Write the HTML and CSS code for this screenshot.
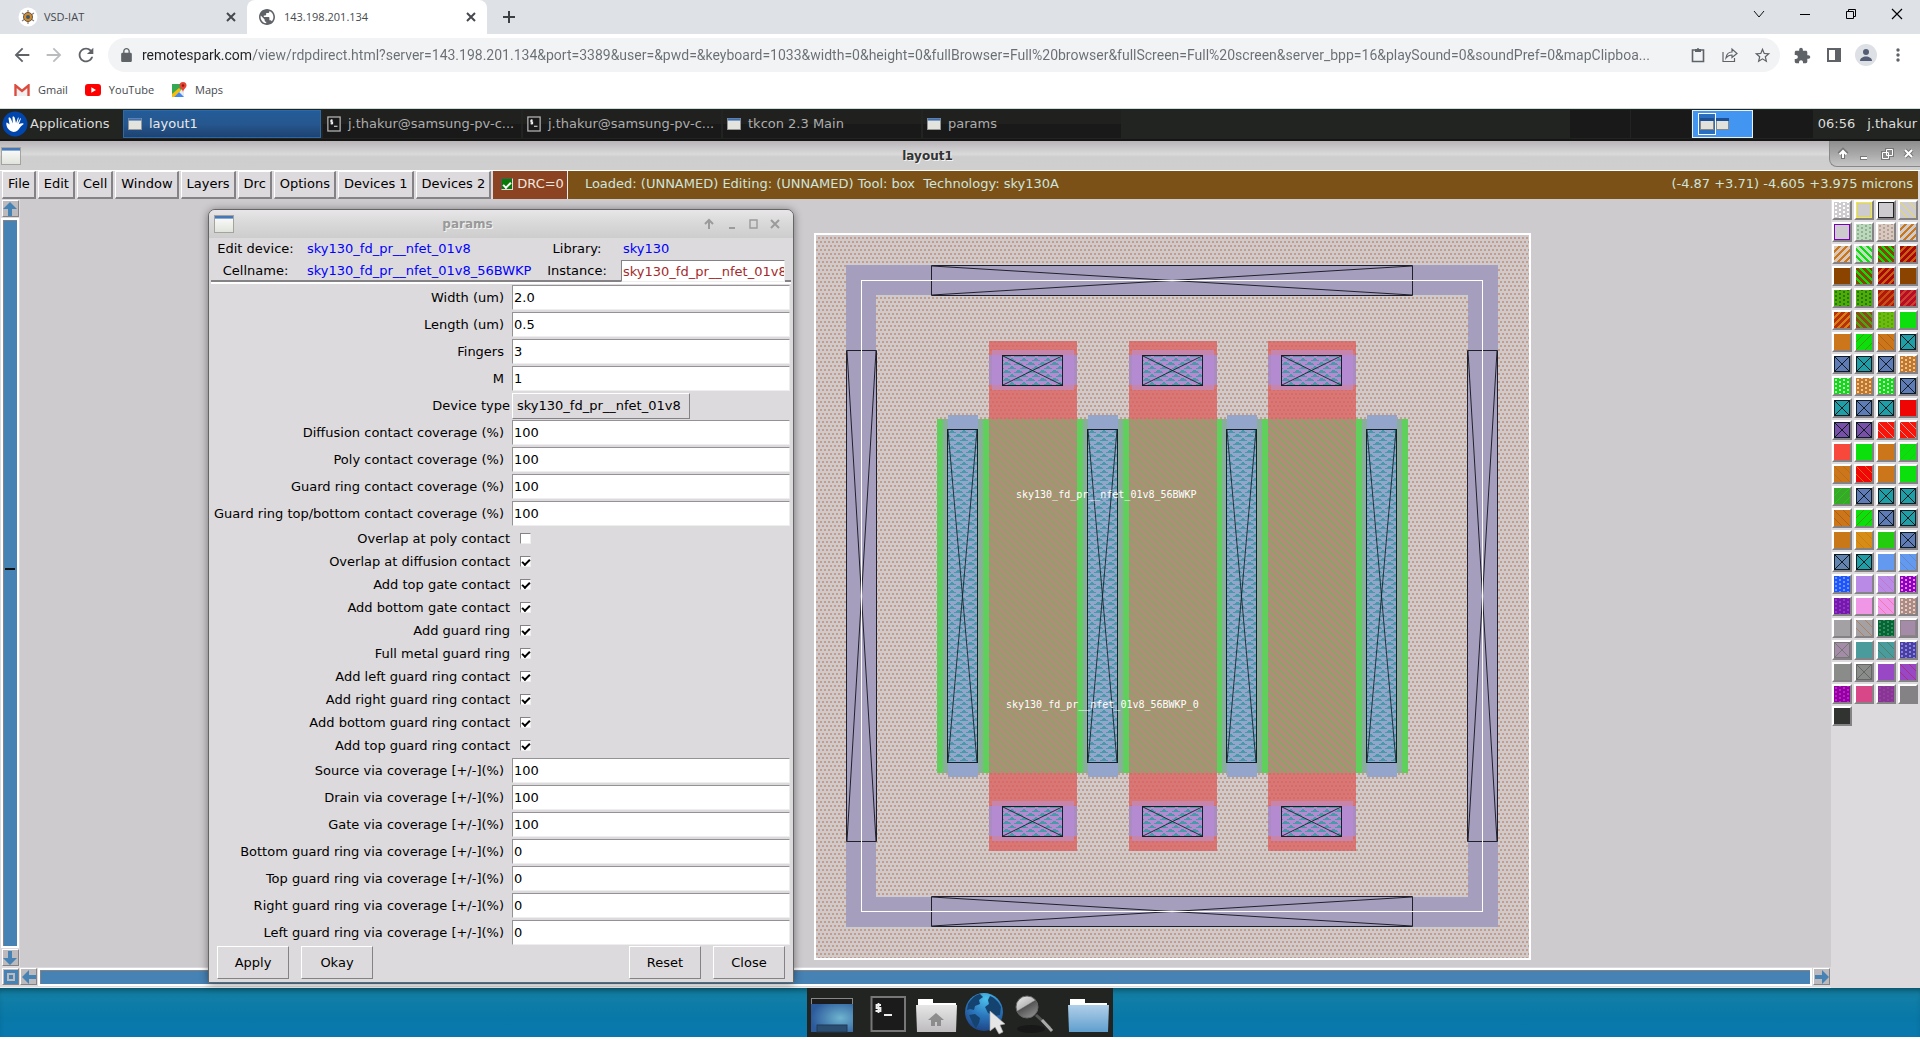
FILE: index.html
```html
<!DOCTYPE html>
<html lang="en">
<head>
<meta charset="utf-8">
<title>143.198.201.134</title>
<link rel="stylesheet" href="styles.css">
</head>
<body>
<svg class="defs" width="0" height="0" aria-hidden="true">
  <symbol id="i-close" viewBox="0 0 12 12"><path d="M2 2l8 8M10 2l-8 8" fill="none" stroke="currentColor" stroke-width="2"/></symbol>
  <symbol id="i-term" viewBox="0 0 16 18"><rect x="1" y="1" width="14" height="16" fill="#191919" stroke="#b9b9b9" stroke-width="1.4"/><path d="M6.6 4.6H4.4v2h2v2H4M5.4 3.6v6M8 11.5h4" fill="none" stroke="#eee" stroke-width="1.2"/></symbol>
  <symbol id="i-win" viewBox="0 0 16 14"><rect x="0.5" y="0.5" width="15" height="13" fill="#e4e4df" stroke="#999"/><rect x="0.5" y="0.5" width="15" height="2.5" fill="#3b6fb5"/></symbol>
  <symbol id="i-winbig" viewBox="0 0 20 18"><rect x="0.5" y="0.5" width="19" height="17" fill="url(#gWin)" stroke="#a3a3a0"/><rect x="1" y="1" width="18" height="2.6" fill="#4478b8"/></symbol>
  <linearGradient id="gWin" x2="0" y2="1"><stop offset="0" stop-color="#fff"/><stop offset="1" stop-color="#dfe2da"/></linearGradient>
</svg>

<header class="chrome">
  <div class="tabs">
    <div class="tab">
      <svg width="20" height="20" viewBox="0 0 20 20"><circle cx="10" cy="10" r="9.5" fill="#fff"/><path d="M10 3v14M4 6l12 8M16 6L4 14" stroke="#8a8378" stroke-width="1.2"/><circle cx="10" cy="10" r="4.5" fill="#d58a2c" stroke="#62564a"/><circle cx="10" cy="10" r="2" fill="#345a72"/></svg>
      <span class="tab-title">VSD-IAT</span>
      <button class="tab-close" aria-label="Close tab"><svg width="12" height="12"><use href="#i-close"/></svg></button>
    </div>
    <div class="tab active">
      <svg width="16" height="16" viewBox="2 2 20 20"><path fill="#5f6368" d="M12 2C6.480 2 2 6.480 2 12s4.480 10 10 10 10-4.480 10-10S17.520 2 12 2zm-1 17.930c-3.950-.49-7-3.850-7-7.930 0-.62.08-1.210.21-1.790L9 15v1c0 1.100.9 2 2 2v1.930zm6.900-2.540c-.26-.81-1-1.390-1.900-1.390h-1v-3c0-.55-.45-1-1-1H8v-2h2c.55 0 1-.45 1-1V7h2c1.100 0 2-.9 2-2v-.41c2.930 1.190 5 4.060 5 7.410 0 2.080-.8 3.970-2.100 5.390z"/></svg>
      <span class="tab-title">143.198.201.134</span>
      <button class="tab-close" aria-label="Close tab"><svg width="12" height="12"><use href="#i-close"/></svg></button>
    </div>
    <button class="tab-new" aria-label="New tab"><svg width="14" height="14" viewBox="0 0 14 14"><path d="M7 1v12M1 7h12" stroke="#3c4043" stroke-width="2"/></svg></button>
    <div class="win-ctl">
      <button aria-label="Search tabs"><svg width="12" height="12" viewBox="0 0 12 12"><path d="M1 3l5 6 5-6" fill="none" stroke="#111"/></svg></button>
      <button aria-label="Minimize"><svg width="12" height="12" viewBox="0 0 12 12"><path d="M1 6.500h10" stroke="#000"/></svg></button>
      <button aria-label="Restore"><svg width="12" height="12" viewBox="0 0 12 12"><path d="M1.500 3.500h7v7h-7zM3.500 3V1.500h7v7H9" fill="none" stroke="#000"/></svg></button>
      <button aria-label="Close"><svg width="12" height="12" viewBox="0 0 12 12"><path d="M1 1l10 10M11 1L1 11" stroke="#000" stroke-width="1.200"/></svg></button>
    </div>
  </div>
  <div class="toolbar">
    <button aria-label="Back"><svg width="22" height="22" viewBox="0 0 24 24"><path fill="#5f6368" d="M20 11H7.830l5.590-5.590L12 4l-8 8 8 8 1.410-1.410L7.830 13H20v-2z"/></svg></button>
    <button aria-label="Forward"><svg width="22" height="22" viewBox="0 0 24 24"><path fill="#babcbe" d="M12 4l-1.410 1.410L16.170 11H4v2h12.170l-5.580 5.590L12 20l8-8z"/></svg></button>
    <button aria-label="Reload"><svg width="22" height="22" viewBox="0 0 24 24"><path fill="#5f6368" d="M17.650 6.350C16.200 4.900 14.210 4 12 4c-4.420 0-7.990 3.580-7.990 8s3.570 8 7.990 8c3.730 0 6.840-2.550 7.730-6h-2.080c-.82 2.330-3.040 4-5.650 4-3.310 0-6-2.690-6-6s2.690-6 6-6c1.660 0 3.140.69 4.220 1.780L13 11h7V4l-2.350 2.350z"/></svg></button>
    <div class="omnibox">
      <svg width="13" height="14" viewBox="3 1 18 21"><path fill="#5f6368" d="M18 8h-1V6c0-2.760-2.240-5-5-5S7 3.240 7 6v2H6c-1.100 0-2 .9-2 2v10c0 1.100.9 2 2 2h12c1.100 0 2-.9 2-2V10c0-1.100-.9-2-2-2zM9 6c0-1.660 1.340-3 3-3s3 1.340 3 3v2H9V6z"/></svg>
      <input class="url" aria-label="Address" value="remotespark.com/view/rdpdirect.html?server=143.198.201.134&amp;port=3389&amp;user=&amp;pwd=&amp;keyboard=1033&amp;width=0&amp;height=0&amp;fullBrowser=Full%20browser&amp;fullScreen=Full%20screen&amp;server_bpp=16&amp;playSound=0&amp;soundPref=0&amp;mapClipboa...">
      <button aria-label="Clipboard"><svg width="16" height="16" viewBox="0 0 16 16"><path d="M2.500 3h11v11.500h-11z" fill="none" stroke="#5f6368" stroke-width="1.600"/><path d="M5 2h2a1 1 0 0 1 2 0h2v3H5z" fill="#5f6368"/></svg></button>
      <button aria-label="Share"><svg width="16" height="16" viewBox="0 0 16 16"><path d="M1 5v9.500h11.500V11M4 11c.5-4 3-6 6-6V2l5 4.500-5 4V8C7.500 8 5.500 9 4 11z" fill="none" stroke="#5f6368" stroke-width="1.200"/></svg></button>
      <button aria-label="Bookmark"><svg width="17" height="17" viewBox="1 1 22 22"><path fill="#5f6368" d="M22 9.240l-7.190-.62L12 2 9.190 8.630 2 9.240l5.460 4.730L5.820 21 12 17.270 18.180 21l-1.630-7.030L22 9.240zM12 15.400l-3.760 2.270 1-4.280-3.320-2.880 4.380-.38L12 6.100l1.710 4.040 4.380.38-3.320 2.880 1 4.280L12 15.400z"/></svg></button>
    </div>
    <button aria-label="Extensions"><svg width="17" height="17" viewBox="1 0 23 23"><path fill="#5f6368" d="M20.500 11H19V7c0-1.100-.9-2-2-2h-4V3.500C13 2.120 11.880 1 10.500 1S8 2.120 8 3.500V5H4c-1.100 0-1.990.9-1.990 2v3.800H3.500c1.490 0 2.700 1.210 2.700 2.700s-1.210 2.700-2.700 2.700H2V20c0 1.100.9 2 2 2h3.800v-1.500c0-1.490 1.210-2.700 2.700-2.700 1.490 0 2.700 1.210 2.700 2.700V22H17c1.100 0 2-.9 2-2v-4h1.500c1.380 0 2.500-1.120 2.500-2.500S21.880 11 20.500 11z"/></svg></button>
    <button aria-label="Side panel"><svg width="14" height="14" viewBox="0 0 14 14"><path d="M0 0h14v14H0zM2 2v10h6V2z" fill="#5f6368" fill-rule="evenodd"/></svg></button>
    <button aria-label="Profile"><svg width="22" height="22" viewBox="0 0 22 22"><circle cx="11" cy="11" r="11" fill="#dde1e6"/><circle cx="11" cy="8" r="3" fill="#535d75"/><path d="M5 17c0-3 3-4.500 6-4.500s6 1.500 6 4.500z" fill="#535d75"/></svg></button>
    <button aria-label="Menu"><svg width="4" height="14" viewBox="0 0 4 14"><g fill="#5f6368"><circle cx="2" cy="2" r="1.700"/><circle cx="2" cy="7" r="1.700"/><circle cx="2" cy="12" r="1.700"/></g></svg></button>
  </div>
  <nav class="bookmarks">
    <a href="#gmail"><svg width="16" height="12" viewBox="0 0 16 12"><path d="M2.800 4v8h10.400V4L8 8z" fill="#f0f0f0"/><path d="M1.500 12V1.500L8 7l6.500-5.500V12" fill="none" stroke="#dd4b3e" stroke-width="2.400"/></svg>Gmail</a>
    <a href="#youtube"><svg width="16" height="12" viewBox="0 0 16 12"><rect width="16" height="12" rx="3" fill="#f00"/><path d="M6.300 3.300v5.400L11 6z" fill="#fff"/></svg>YouTube</a>
    <a href="#maps"><svg width="16" height="16" viewBox="0 0 16 16"><path d="M1 2h12v13H1z" fill="#34a853"/><path d="M3 15L13 5v10z" fill="#e8eaed"/><path d="M3 15l5-5 5 5z" fill="#4285f4"/><path d="M1 12L8 6l2 2L3 15H1z" fill="#fbbc05"/><path d="M12 0a3.500 3.500 0 0 1 3.500 3.500C15.500 6 12.500 7 12 10c-.5-3-3.500-4-3.500-6.500A3.500 3.500 0 0 1 12 0z" fill="#ea4335"/><circle cx="12" cy="3.500" r="1.200" fill="#8c1b12"/></svg>Maps</a>
  </nav>
</header>

<main class="remote">
  <div class="panel">
    <button class="apps"><svg width="26" height="26" viewBox="0 0 26 26"><circle cx="13" cy="13" r="12.500" fill="#0046ad"/><path d="M5.500 17C4.500 15 4 13 4.500 11.500c1 0 2 1 3 2L6.500 7c1-1 2 0 2.500 1l1.800 4.500L10.500 6c1-1 2 0 2.300 1l1.200 5 2-5.500.8.300-1.300 5.700 2.800-5.300.7.400-2.200 5.600c1.500-.7 3.500-1.400 4.700-.7.500 1-1.500 1.700-2.500 2.700-1.700 2-2.500 4.300-5 5.300-3.500 1.200-6.500-.5-8.500-3.500z" fill="#fff"/></svg>Applications</button>
    <button class="task on"><svg width="14" height="12"><use href="#i-win"/></svg><span>layout1</span></button>
    <button class="task"><svg width="14" height="16"><use href="#i-term"/></svg><span>j.thakur@samsung-pv-c...</span></button>
    <button class="task"><svg width="14" height="16"><use href="#i-term"/></svg><span>j.thakur@samsung-pv-c...</span></button>
    <button class="task"><svg width="14" height="12"><use href="#i-win"/></svg><span>tkcon 2.3 Main</span></button>
    <button class="task"><svg width="14" height="12"><use href="#i-win"/></svg><span>params</span></button>
    <div class="pager">
      <button aria-label="Workspace 1"></button><button aria-label="Workspace 2"></button>
      <button class="cur" aria-label="Workspace 3"><svg width="60" height="26" viewBox="0 0 60 26"><rect x="6.500" y="2.500" width="17" height="21" fill="#2a6fbd" stroke="#fff"/><rect x="8.500" y="8.500" width="13" height="10" fill="#e2e2dc" stroke="#888"/><rect x="8" y="7" width="14" height="3" fill="#1c4f93"/><rect x="24.500" y="8.500" width="12" height="10" fill="#e2e2dc" stroke="#888"/><rect x="24" y="7" width="13" height="3" fill="#1c4f93"/></svg></button>
      <button aria-label="Workspace 4"></button>
    </div>
    <span class="clock">06:56</span>
    <span class="user">j.thakur</span>
  </div>

  <section class="window">
    <div class="titlebar">
      <svg width="20" height="18"><use href="#i-winbig"/></svg>
      <h1>layout1</h1>
      <div class="tb-ctl">
        <svg width="84" height="14" viewBox="0 0 84 14"><g fill="none" stroke="#777" stroke-width="4"><path d="M11 12V5M7 7l4-4 4 4M28 11h7"/><path d="M73 3l7 7M80 3l-7 7"/></g><g fill="none" stroke="#fff" stroke-width="2"><path d="M11 11V5M7.500 7.500L11 4l3.500 3.500M29 11h6M73 3l7 7M80 3l-7 7"/></g><path d="M54.500 2.500h6v6h-6zM50.500 5.500h6v6h-6z" fill="#999" stroke="#777" stroke-width="3"/><path d="M54.500 2.500h6v6h-6zM50.500 5.500h6v6h-6z" fill="#888" stroke="#fff"/></svg>
      </div>
    </div>
    <div class="menubar">
      <button>File</button><button>Edit</button><button>Cell</button><button>Window</button><button>Layers</button><button>Drc</button><button>Options</button><button>Devices 1</button><button>Devices 2</button>
      <label class="drc"><input type="checkbox" checked>DRC=0</label>
      <div class="status"><span>Loaded: (UNNAMED) Editing: (UNNAMED) Tool: box&nbsp; Technology: sky130A</span><span>(-4.87 +3.71) -4.605 +3.975 microns</span></div>
    </div>
    <div class="work">
      <div class="vbar">
        <button class="sq" aria-label="Scroll up"><svg width="14" height="14" viewBox="0 0 14 14"><path d="M7 0l7 7H9v7H5V7H0z"/></svg></button>
        <div class="trough"><i class="mark"></i></div>
        <button class="sq" aria-label="Scroll down"><svg width="14" height="14" viewBox="0 0 14 14"><path d="M7 14L0 7h5V0h4v7h5z"/></svg></button>
      </div>
      <div class="canvas">
        <svg class="chip" viewBox="814 233 717 727" width="717" height="727">
          <defs>
            <pattern id="dots" x="816" y="237" width="4" height="8" patternUnits="userSpaceOnUse"><path d="M2 0h2v2h-2zM0 4h2v2h-2z" fill="#cb9a82"/></pattern>
            <pattern id="rdots" x="816" y="237" width="4" height="8" patternUnits="userSpaceOnUse"><path d="M2 0h2v2h-2zM0 4h2v2h-2z" fill="#d96a66"/></pattern>
            <pattern id="hatch" x="816" y="237" width="8" height="8" patternUnits="userSpaceOnUse"><path d="M-1 -1l10 10M-1 7l2 2M7 -1l2 2" stroke="#5cc150" stroke-width="1"/></pattern>
            <pattern id="tri" x="947" y="429" width="12" height="8" patternUnits="userSpaceOnUse"><path d="M0 4h1v-1h2v-1h1v-1h2v1h1v1h2v1h1zM6 8h1v-1h2v-1h1v-1h2v3zM0 8h4v-1h-1v-1h-2v-1h-1z" fill="#479ba8"/></pattern>
            <g id="dc">
              <rect x="943" y="419" width="40" height="354" fill="#8aae9c"/>
              <rect x="948" y="415" width="30" height="362" fill="#93a5ca"/>
              <rect x="947.500" y="429.500" width="30" height="333" fill="url(#tri)" stroke="#142026"/>
              <path d="M948 430l29 332M977 430l-29 332" stroke="#142026" stroke-opacity=".85"/>
            </g>
            <g id="pc">
              <rect x="992" y="350" width="82" height="40" fill="#c885ac"/>
              <rect x="989" y="355" width="88" height="30" fill="#aa8cc0"/>
              <rect x="992" y="355" width="82" height="30" fill="#b48ad0"/>
              <rect x="1002.500" y="355.500" width="60" height="30" fill="url(#tri)" stroke="#142026"/>
              <path d="M1003 356l59 29M1062 356l-59 29" stroke="#142026" stroke-opacity=".85"/>
            </g>
            <g id="finger">
              <rect x="989" y="341" width="88" height="510" fill="#d87876"/>
              <rect x="989" y="341" width="88" height="510" fill="url(#rdots)"/>
              <rect x="989" y="419" width="88" height="354" fill="#ae8e76"/>
              <rect x="989" y="419" width="88" height="354" fill="url(#hatch)"/>
              <use href="#pc"/><use href="#pc" y="451"/>
            </g>
          </defs>
          <rect x="815" y="234" width="715" height="725" fill="#cecbcf"/>
          <rect x="815" y="234" width="715" height="725" fill="url(#dots)" stroke="#fff" stroke-width="2"/>
          <path d="M846 265h652v662H846zM876 295v602h592V295z" fill="#a59fbd" fill-rule="evenodd"/>
          <g fill="none" stroke="#20202c">
            <path d="M931.500 265.500h481v30h-481zM931.500 896.500h481v30h-481zM846.500 350.500h30v491h-30zM1467.500 350.500h30v491h-30z"/>
            <path d="M932 266l480 29M1412 266l-480 29M932 897l480 29M1412 897l-480 29M847 351l29 490M876 351l-29 490M1468 351l29 490M1497 351l-29 490"/>
          </g>
          <rect x="861.500" y="280.500" width="621" height="631" fill="none" stroke="#fff"/>
          <rect x="937" y="419" width="471" height="354" fill="#60d05c"/>
          <use href="#finger"/><use href="#finger" x="140"/><use href="#finger" x="279"/>
          <use href="#dc"/><use href="#dc" x="140"/><use href="#dc" x="279"/><use href="#dc" x="419"/>
          <g class="netname"><text x="1016" y="498">sky130_fd_pr__nfet_01v8_56BWKP</text><text x="1006" y="708">sky130_fd_pr__nfet_01v8_56BWKP_0</text></g>
        </svg>
      </div>
      <div class="palette" id="palette"></div>
      <div class="hbar">
        <button class="sq" aria-label="Fit view"><svg width="14" height="14" viewBox="0 0 14 14"><path d="M0 0h14v14H0zM3 3v8h8V3zM5 5h4v4H5z" fill-rule="evenodd"/></svg></button>
        <button class="sq" aria-label="Scroll left"><svg width="14" height="14" viewBox="0 0 14 14"><path d="M0 7l7-7v5h7v4H7v5z"/></svg></button>
        <div class="trough"></div>
        <button class="sq" aria-label="Scroll right"><svg width="14" height="14" viewBox="0 0 14 14"><path d="M14 7l-7 7V9H0V5h7V0z"/></svg></button>
      </div>
    </div>
  </section>

  <form class="dialog">
    <div class="dlg-title">
      <svg width="20" height="18"><use href="#i-winbig"/></svg>
      <h2>params</h2>
      <svg width="80" height="12" viewBox="0 0 80 12" fill="none" stroke="#9b9b9b" stroke-width="2"><path d="M8 11V3M4 6l4-4 4 4M28 10h6"/><path d="M49 2h7v8h-7z" stroke-width="1.400"/><path d="M70 2l8 8M78 2l-8 8"/></svg>
    </div>
    <div class="dlg-head">
      <span>Edit device:</span><b>sky130_fd_pr__nfet_01v8</b><span>Library:</span><b>sky130</b>
      <span>Cellname:</span><b>sky130_fd_pr__nfet_01v8_56BWKP</b><label for="inst">Instance:</label><input id="inst" value="sky130_fd_pr__nfet_01v8_56BWKP_0">
    </div>
    <div class="fields">
      <label class="f"><span>Width (um)</span><input value="2.0"></label>
      <label class="f"><span>Length (um)</span><input value="0.5"></label>
      <label class="f"><span>Fingers</span><input value="3"></label>
      <label class="f"><span>M</span><input value="1"></label>
      <label class="f sel"><span>Device type</span><select><option>sky130_fd_pr__nfet_01v8</option></select></label>
      <label class="f"><span>Diffusion contact coverage (%)</span><input value="100"></label>
      <label class="f"><span>Poly contact coverage (%)</span><input value="100"></label>
      <label class="f"><span>Guard ring contact coverage (%)</span><input value="100"></label>
      <label class="f"><span>Guard ring top/bottom contact coverage (%)</span><input value="100"></label>
      <label class="c"><span>Overlap at poly contact</span><input type="checkbox"></label>
      <label class="c"><span>Overlap at diffusion contact</span><input type="checkbox" checked></label>
      <label class="c"><span>Add top gate contact</span><input type="checkbox" checked></label>
      <label class="c"><span>Add bottom gate contact</span><input type="checkbox" checked></label>
      <label class="c"><span>Add guard ring</span><input type="checkbox" checked></label>
      <label class="c"><span>Full metal guard ring</span><input type="checkbox" checked></label>
      <label class="c"><span>Add left guard ring contact</span><input type="checkbox" checked></label>
      <label class="c"><span>Add right guard ring contact</span><input type="checkbox" checked></label>
      <label class="c"><span>Add bottom guard ring contact</span><input type="checkbox" checked></label>
      <label class="c"><span>Add top guard ring contact</span><input type="checkbox" checked></label>
      <label class="f"><span>Source via coverage [+/-](%)</span><input value="100"></label>
      <label class="f"><span>Drain via coverage [+/-](%)</span><input value="100"></label>
      <label class="f"><span>Gate via coverage [+/-](%)</span><input value="100"></label>
      <label class="f"><span>Bottom guard ring via coverage [+/-](%)</span><input value="0"></label>
      <label class="f"><span>Top guard ring via coverage [+/-](%)</span><input value="0"></label>
      <label class="f"><span>Right guard ring via coverage [+/-](%)</span><input value="0"></label>
      <label class="f"><span>Left guard ring via coverage [+/-](%)</span><input value="0"></label>
    </div>
    <div class="actions"><button type="button">Apply</button><button type="button">Okay</button><button type="button" class="push">Reset</button><button type="button">Close</button></div>
  </form>

  <footer class="desk">
    <div class="dock">
      <svg width="306" height="49" viewBox="807 988 306 49">
        <defs>
          <radialGradient id="gDesk" cx=".7" cy=".5" r=".7"><stop offset="0" stop-color="#6fb4cf"/><stop offset="1" stop-color="#2c5a9c"/></radialGradient>
          <linearGradient id="gHome" x2="0" y2="1"><stop offset="0" stop-color="#e6e6e6"/><stop offset="1" stop-color="#bdbbbe"/></linearGradient>
          <linearGradient id="gFold" x2="0" y2="1"><stop offset="0" stop-color="#b0cfe8"/><stop offset="1" stop-color="#5f9fcf"/></linearGradient>
          <radialGradient id="gGlobe" cx=".55" cy=".15" r=".9"><stop offset="0" stop-color="#4cc0ec"/><stop offset=".5" stop-color="#2b78bd"/><stop offset="1" stop-color="#1d3f80"/></radialGradient>
          <linearGradient id="gLens" x2=".6" y2="1"><stop offset="0" stop-color="#efefef"/><stop offset=".5" stop-color="#bbb"/><stop offset=".55" stop-color="#555"/><stop offset="1" stop-color="#888"/></linearGradient>
        </defs>
        <rect x="811.500" y="998.500" width="41" height="8" fill="#1c1c1c" stroke="#888"/><rect x="811" y="1004" width="42" height="28" fill="url(#gDesk)"/><rect x="817" y="1025" width="30" height="7" fill="#2a4d70" stroke="#203a58"/>
        <rect x="871.500" y="997" width="33.500" height="34" fill="#1b1b1b" stroke="#777" stroke-width="2"/><path d="M881 1005h-4.500v3h4v3h-5M878.500 1003v10M884 1015h8" fill="none" stroke="#eee" stroke-width="1.800"/>
        <path d="M918 999h15v4h23v5h-38z" fill="#fff"/><path d="M916 1005h41l-1 27h-39z" fill="url(#gHome)"/><path d="M936 1013l-8 7h3v6h4v-4h2v4h4v-6h3z" fill="#8c8c8c"/>
        <circle cx="984" cy="1012" r="19" fill="url(#gGlobe)"/><path d="M968 1004c3-5 7-9 12-10l3 3-4 3 1 4-5 2-1 4-4-1-3 1zM969 1015l6-1 5 4-1 5-3 5-3-4zM990 996c5 2 9 6 11 11l-1 8-5 1-7-3-3-6 4-3-1-4z" fill="#15436f"/>
        <path d="M990 1011l15 13-5 1 3 7-4 2-4-7-5 4z" fill="#e6e6e6" stroke="#aaa" stroke-width=".6"/>
        <ellipse cx="1031" cy="1029" rx="14" ry="4" fill="#181818"/><path d="M1036 1015l14 13" stroke="#555" stroke-width="3"/><path d="M1042 1020l10 11" stroke="#aaa" stroke-width="3"/><circle cx="1027" cy="1007" r="11" fill="url(#gLens)" stroke="#666"/>
        <path d="M1070 999h15v4h22v5h-37z" fill="#fff"/><path d="M1068 1005h41l-1 27h-39z" fill="url(#gFold)"/>
      </svg>
    </div>
  </footer>
</main>
<script src="script.js"></script>
</body>
</html>
```
FILE: styles.css
```css
*, *::before, *::after { box-sizing: border-box; }
body {
  margin: 0; min-height: 100vh; padding-bottom: 3px; background: #fff; overflow: hidden;
  display: flex; flex-direction: column;
  font: 13px/16px "DejaVu Sans", sans-serif; color: #000;
}
button, input, select { font: inherit; color: inherit; margin: 0; padding: 0; border: 0; border-radius: 0; background: none; }
button { display: flex; align-items: center; justify-content: center; }
svg { display: block; flex: none; }
h1, h2 { margin: 0; font-size: 12px; line-height: 16px; }
.defs { position: absolute; }

/* browser frame */
.chrome { font: 12px/16px "Open Sans", sans-serif; color: #45494d; border-bottom: 1px solid #cfdcdc; }
.tabs { display: flex; height: 34px; background: #dee1e6; }
.tab { display: flex; align-items: center; width: 240px; padding: 0 10px 0 12px; gap: 9px; }
.tab:first-child { width: 247px; padding-left: 18px; gap: 6px; }
.tab.active { background: #fff; border-radius: 8px 8px 0 0; }
.tab-title { flex: 1; font-size: 11px; }
.tab-new { width: 44px; height: 34px; }
.win-ctl { display: flex; margin-left: auto; height: 28px; }
.win-ctl button { width: 46px; }
.toolbar { display: flex; align-items: center; height: 42px; padding: 0 6px; }
.toolbar > button { width: 32px; height: 32px; }
.omnibox { flex: 1; display: flex; align-items: center; height: 34px; margin: 0 6px; padding: 0 2px 0 12px; border-radius: 17px; background: #f1f3f4; }
.omnibox button { width: 32px; height: 32px; }
.url {
  flex: 1; min-width: 0; margin: 0 0 0 9px; height: 24px; font: 14px/16px Roboto, sans-serif; outline: 0;
  color: transparent; background: linear-gradient(to right, #202124 109px, #6a6e73 109px); -webkit-background-clip: text; background-clip: text;
}
.bookmarks { display: flex; align-items: center; height: 32px; padding: 0 14px 4px; gap: 17px; font-size: 11px; }
.bookmarks a { display: flex; align-items: center; gap: 8px; color: inherit; text-decoration: none; }

/* remote desktop */
.remote { position: relative; flex: 1; display: flex; flex-direction: column; }
.panel { display: flex; align-items: center; height: 32px; background: #222421; color: #dcdcdc; border-bottom: 2px solid #151515; }
.apps { width: 123px; justify-content: flex-start; padding-left: 2px; gap: 2px; }
.task { width: 198px; height: 28px; justify-content: flex-start; padding-left: 4px; gap: 7px; margin-right: 2px; background: linear-gradient(#20211f 50%, #181918 50%); color: #adadad; white-space: nowrap; }
.task.on { background: linear-gradient(#235c98, #26578f 50%, #1e4371); color: #e8e8e8; border: 1px solid #2d69a5; }
.pager { display: flex; margin-left: auto; background: #191919; }
.pager button { width: 61px; height: 28px; border-right: 1px solid #222421; }
.pager .cur { background: #4295f0; border: 1px solid #e8f0f8; }
.clock { margin: 0 12px 0 4px; }
.user { margin-right: 3px; }

.window { flex: 1; display: flex; flex-direction: column; background: #dddadd; }
.titlebar { display: flex; align-items: center; height: 29px; padding-left: 1px; background: linear-gradient(#b8b4b8, #dadada 45%, #cecece 55%, #cfcfcf); color: #333; }
.titlebar h1 { flex: 1; padding-left: 5px; text-align: center; text-shadow: 1px 1px 0 #f4f4f4; }
.tb-ctl { align-self: flex-start; height: 26px; width: 91px; padding: 6px 0 0 2px; border: 1px solid #888; border-width: 0 0 1px 1px; border-radius: 0 0 0 8px; background: linear-gradient(#8d8d8d, #aaa 55%, #c6c6c6); }
.menubar { display: flex; gap: 2px; height: 29px; padding: 0 2px; border-top: 1px solid #fff; }
.menubar button { padding: 0 4px 2px 5px; border: 1px solid #fff; border-width: 1px 2px 2px 1px; border-color: #fff #848284 #848284 #fff; background: #dddadd; white-space: nowrap; }
.drc { display: flex; align-items: center; gap: 4px; padding: 0 3px 2px 8px; background: #8c4322; color: #f2e6de; white-space: nowrap; }
.drc input { appearance: none; width: 12px; height: 12px; border: 1px solid #ddd; border-color: #555 #ddd #ddd #555; background: #077a07; display: grid; place-items: center; }
.drc input::after { content: ""; width: 8px; height: 5px; border: solid #fff; border-width: 0 0 2px 2px; transform: rotate(-45deg); }
.status { flex: 1; display: flex; justify-content: space-between; align-items: center; padding: 0 5px 2px 17px; margin-left: -2px; background: #7b5118; color: #cfe5dc; border-left: 1px solid #eee; white-space: nowrap; }

.work { flex: 1; display: grid; grid-template: "v c p" 1fr "h h p" 21px / 20px 1fr 89px; background: #cecbcf; }
.vbar { grid-area: v; display: flex; flex-direction: column; align-items: center; gap: 1px; padding: 1px 0; background: #dddadd; }
.hbar { grid-area: h; display: flex; align-items: flex-start; gap: 1px; padding: 1px 1px 0 2px; background: #dddadd; border-bottom: 1px solid #eee; }
.sq { width: 17px; height: 17px; flex: none; border: 1px solid #fff; border-color: #fff #848284 #848284 #fff; background: #bdbabd; }
.sq svg { fill: #4682b4; }
.trough { flex: 1; background: #4682b4; border: 2px solid #fff; box-shadow: inset 1px 1px 0 #848284; }
.vbar .trough { width: 18px; }
.hbar .trough { height: 18px; }
.mark { display: block; position: relative; top: 48%; left: 2px; width: 10px; height: 2px; background: #111; }
.canvas { grid-area: c; position: relative; overflow: hidden; }
.chip { position: absolute; left: 794px; top: 34px; }
.netname { font: 10px "DejaVu Sans Mono", monospace; fill: #fff; }
.palette { grid-area: p; display: grid; grid-template-columns: repeat(4, 20px); grid-auto-rows: 20px; gap: 2px; align-content: start; padding: 1px; background: #dddadd; }

/* layer swatches */
.sw { border: 2px solid #fff; border-color: #fff #848284 #848284 #fff; background: #dddadd; }
.sw i { display: block; flex: none; width: 16px; height: 16px; background-color: var(--a); }
.sw .outline { border: 1px solid var(--b); }
.sw .dots { background-image: conic-gradient(from 270deg at 2px 2px, var(--b) 25%, transparent 0), conic-gradient(from 270deg at 2px 2px, var(--b) 25%, transparent 0); background-size: 8px 4px; background-position: 1px 1px, 5px 3px; }
.sw .back { background-image: repeating-linear-gradient(45deg, transparent 0 3px, var(--b) 3px 5px); }
.sw .fwd { background-image: repeating-linear-gradient(135deg, transparent 0 3px, var(--b) 3px 5px); }
.sw .thin { background-image: repeating-linear-gradient(45deg, transparent 0 5px, var(--b) 5px 6px); }
.sw .thinf { background-image: repeating-linear-gradient(135deg, transparent 0 5px, var(--b) 5px 6px); }
.sw .cross { border: 1px solid var(--b); background-image: linear-gradient(45deg, transparent 47%, var(--b) 47% 53%, transparent 53%), linear-gradient(135deg, transparent 47%, var(--b) 47% 53%, transparent 53%); }

/* params dialog */
.dialog { position: absolute; left: 208px; top: 100px; width: 586px; border: 1px solid #666; border-radius: 7px 7px 0 0; background: #dddadd; box-shadow: 0 1px 9px rgba(0, 0, 0, .45); padding: 0 2px 3px; }
.dlg-title { display: flex; align-items: center; height: 28px; margin: 0 -2px; padding: 0 12px 0 5px; border-radius: 6px 6px 0 0; background: linear-gradient(#e8e6e8, #d8d8d8 50%, #cdcdcd); color: #999; }
.dlg-title h2 { flex: 1; text-align: center; text-shadow: 1px 1px 0 #f4f4f4; }
.dlg-head { display: grid; grid-template-columns: 77px 231px 72px 164px; grid-auto-rows: 22px; column-gap: 8px; align-items: center; justify-items: center; height: 46px; padding: 0 6px; border-bottom: 2px solid #fff; box-shadow: inset 0 -2px 0 #848284; }
.dlg-head b { margin-left: 5px; font-weight: normal; color: #00f; justify-self: start; white-space: nowrap; }
.dlg-head b:nth-of-type(2) { margin-left: 2px; }
.dlg-head input { justify-self: start; width: 100%; height: 22px; padding-left: 1px; border: 1px solid #848284; border-color: #848284 #eee #eee #848284; background: #fff; color: #a52a2a; }
.fields { display: grid; }
.f, .c { display: grid; grid-template-columns: 301px 1fr; align-items: center; }
.f { height: 27px; }
.c { height: 23px; }
.f span { text-align: right; padding-right: 8px; white-space: nowrap; }
.sel span, .c span { text-align: right; padding-right: 2px; }
.f input { height: 25px; margin-right: 1px; padding-left: 1px; border: 1px solid #949294; border-color: #949294 #eee #eee #949294; background: #fff; }
.f select { appearance: none; justify-self: start; height: 26px; width: 178px; padding-left: 4px; border: 1px solid #fff; border-color: #fff #848284 #848284 #fff; }
.c input { appearance: none; width: 11px; height: 11px; margin-left: 8px; background: #fff; border: 1px solid #fff; border-color: #848284 #eee #eee #848284; display: grid; place-items: center; }
.c input:checked::after { content: ""; width: 8px; height: 5px; border: solid #000; border-width: 0 0 2px 2px; transform: rotate(-45deg); }
.actions { display: flex; gap: 12px; padding: 0 6px; }
.actions button { width: 72px; height: 33px; border: 1px solid #fff; border-color: #fff #848284 #848284 #fff; }
.actions .push { margin-left: auto; }

.desk { display: flex; justify-content: center; height: 49px; background: linear-gradient(#1581a6, #0878a8 60%, #0a78ae); box-shadow: inset 0 6px 6px -4px rgba(0, 50, 60, .7); }
.dock { background: #222421; }
```
FILE: script.js
```js
// Layer palette: pattern, base colour, mark colour
const G = '#cecbcf', GR = '#0ce00c', OR = '#cc761c', BR = '#8b4400', TE = '#1f9fa5', BL = '#5f7bb5', K = '#101c24', RD = '#a80808';
const layers = [
  ['dots', G, '#fff'], ['outline', G, '#f4ec20'], ['outline', G, '#222'], ['thin', G, '#eddc4a'],
  ['outline', G, '#7a00b8'], ['dots', G, '#5bd55b'], ['dots', G, '#d29a66'], ['fwd', G, OR],
  ['fwd', '#d8c8bc', OR], ['back', '#c4dcc4', GR], ['back', BR, GR], ['fwd', RD, '#c86010'],
  ['solid', BR], ['back', BR, GR], ['fwd', RD, '#c86010'], ['solid', BR],
  ['dots', '#10cc08', '#e01808'], ['dots', '#10cc08', '#e01808'], ['fwd', '#b01808', '#c85018'], ['fwd', '#b80c24', '#cc4030'],
  ['fwd', '#b83008', '#d88018'], ['back', '#904818', '#48a810'], ['dots', '#38d808', '#f05020'], ['solid', GR],
  ['solid', OR], ['thinf', GR, '#4a9a08'], ['thin', OR, '#b06010'], ['cross', TE, K],
  ['cross', BL, K], ['cross', TE, K], ['cross', BL, K], ['dots', OR, G],
  ['dots', GR, '#dde'], ['dots', OR, G], ['dots', GR, '#dde'], ['cross', BL, K],
  ['cross', TE, K], ['cross', BL, K], ['cross', TE, K], ['solid', '#f00505'],
  ['cross', '#7850a8', K], ['cross', '#7850a8', K], ['thin', '#f81408', '#c8a0a0'], ['thin', '#f81408', '#c8a0a0'],
  ['solid', '#f8483c'], ['solid', GR], ['solid', OR], ['thinf', GR, '#20c818'],
  ['thin', OR, '#bc6c18'], ['thin', '#f00808', '#f06010'], ['solid', OR], ['solid', GR],
  ['thinf', '#38a828', '#28c818'], ['cross', BL, K], ['cross', TE, K], ['cross', TE, K],
  ['thin', OR, '#b06010'], ['thinf', GR, '#4a9a08'], ['cross', BL, K], ['cross', TE, K],
  ['solid', '#c87818'], ['thin', '#d88c18', '#c88010'], ['solid', '#24cc10'], ['cross', BL, K],
  ['cross', '#6484b0', K], ['cross', TE, K], ['solid', '#639af0'], ['thin', '#639af0', '#6088c8'],
  ['dots', '#0c5cff', '#a07cf0'], ['solid', '#b98ae6'], ['thin', '#b98ae6', '#c078c8'], ['dots', '#8c00c0', '#f080f0'],
  ['dots', '#8010b8', '#7050a0'], ['solid', '#f096e6'], ['thin', '#f096e6', '#f078b0'], ['dots', '#a884b0', '#f0e040'],
  ['solid', '#a3a1a4'], ['thin', '#a3a1a4', '#b08060'], ['dots', '#0c6428', '#209080'], ['outline', '#a48ca8', '#8c8488'],
  ['cross', '#a48ca8', '#777'], ['solid', '#4a9c9c'], ['thin', '#4a9c9c', '#4f7f6f'], ['dots', '#6030b0', '#40b0b0'],
  ['solid', '#8a8c8a'], ['cross', '#8a8c8a', '#666'], ['solid', '#9848c4'], ['thin', '#9848c4', '#a83080'],
  ['dots', '#8c00b0', '#d020a0'], ['solid', '#d84888'], ['dots', '#9030a0', '#805080'], ['solid', '#848284'],
  ['solid', '#303330']
];
const palette = document.getElementById('palette');
layers.forEach(([kind, base, mark], n) => {
  const b = document.createElement('button');
  b.className = 'sw';
  b.setAttribute('aria-label', 'Layer ' + (n + 1));
  const i = document.createElement('i');
  i.className = kind;
  i.style.setProperty('--a', base);
  i.style.setProperty('--b', mark || base);
  b.append(i);
  palette.append(b);
});
```
